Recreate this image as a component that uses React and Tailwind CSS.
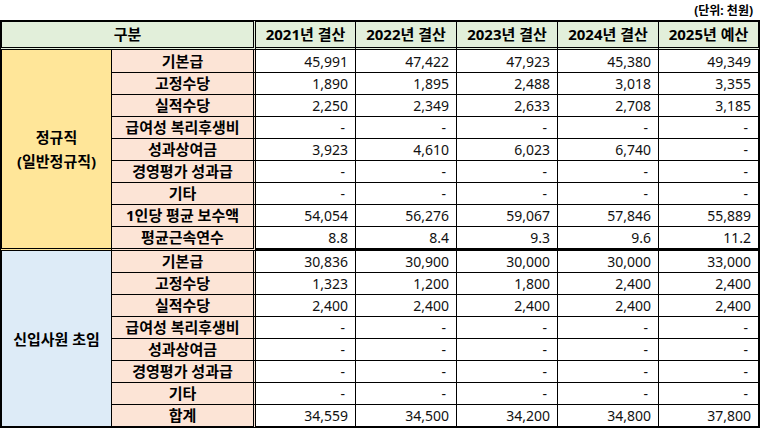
import React from "react";

const years = ["2021년 결산", "2022년 결산", "2023년 결산", "2024년 결산", "2025년 예산"];

const sec1 = [
  ["기본급", ["45,991", "47,422", "47,923", "45,380", "49,349"]],
  ["고정수당", ["1,890", "1,895", "2,488", "3,018", "3,355"]],
  ["실적수당", ["2,250", "2,349", "2,633", "2,708", "3,185"]],
  ["급여성 복리후생비", ["-", "-", "-", "-", "-"]],
  ["성과상여금", ["3,923", "4,610", "6,023", "6,740", "-"]],
  ["경영평가 성과급", ["-", "-", "-", "-", "-"]],
  ["기타", ["-", "-", "-", "-", "-"]],
  ["1인당 평균 보수액", ["54,054", "56,276", "59,067", "57,846", "55,889"]],
  ["평균근속연수", ["8.8", "8.4", "9.3", "9.6", "11.2"]],
];

const sec2 = [
  ["기본급", ["30,836", "30,900", "30,000", "30,000", "33,000"]],
  ["고정수당", ["1,323", "1,200", "1,800", "2,400", "2,400"]],
  ["실적수당", ["2,400", "2,400", "2,400", "2,400", "2,400"]],
  ["급여성 복리후생비", ["-", "-", "-", "-", "-"]],
  ["성과상여금", ["-", "-", "-", "-", "-"]],
  ["경영평가 성과급", ["-", "-", "-", "-", "-"]],
  ["기타", ["-", "-", "-", "-", "-"]],
  ["합계", ["34,559", "34,500", "34,200", "34,800", "37,800"]],
];

function bottomClass(kind) {
  if (kind === "double") return "border-b-[3px] border-double";
  if (kind === "thick") return "border-b-2";
  return "border-b";
}

function Rows({ data, label, bg, bottom }) {
  const out = [];
  data.forEach(([name, vals], i) => {
    const last = i === data.length - 1;
    const b = last ? bottomClass(bottom) : "border-b";
    if (i === 0) {
      out.push(
        <div
          key="cat"
          className={
            (data.length === 9 ? "row-span-9 " : "row-span-8 ") +
            bg +
            " border-l-2 border-r border-black flex flex-col items-center justify-center font-bold text-[15px] leading-[24px] " +
            bottomClass(bottom)
          }
        >
          {label.map((l) => (
            <span key={l}>{l}</span>
          ))}
        </div>
      );
    }
    out.push(
      <div
        key={"n" + i}
        className={
          "bg-[#FCE4D6] border-r-[3px] border-double border-black flex items-center justify-center font-bold text-[15px] " +
          b
        }
      >
        {name}
      </div>
    );
    vals.forEach((v, j) => {
      const rb = j === 4 ? "border-r-2" : "border-r";
      const pad = v === "-" ? "pr-[10px]" : "pr-[7px]";
      out.push(
        <div
          key={"v" + i + "-" + j}
          className={
            "bg-white border-black border-solid flex items-center justify-end text-[14px] text-[#111]" +
            " " +
            rb +
            " " +
            pad +
            " " +
            b
          }
        >
          {v}
        </div>
      );
    });
  });
  return out;
}

export default function App() {
  return (
    <div className="w-[760px] h-[428px] bg-white text-black font-['Noto_Sans','Noto_Sans_CJK_KR',sans-serif] overflow-hidden">
      <div className="h-[20px] flex items-end justify-end pr-[7px] pb-[3px] text-[12px] font-bold leading-none">
        (단위: 천원)
      </div>
      <div className="grid grid-cols-[112px_144px_100px_101px_101px_101px_101px] grid-rows-[30px_23px_repeat(7,22px)_24px_repeat(7,22px)_23px]">
        <div className="col-span-2 bg-[#E2EFDA] border-t-2 border-l-2 border-black border-b-[3px] border-r-[3px] border-double flex items-center justify-center font-bold text-[15px]">
          구분
        </div>
        {years.map((y, j) => (
          <div
            key={y}
            className={
              "bg-[#E2EFDA] border-t-2 border-black border-b-[3px] border-double flex items-center justify-center font-bold text-[15px] " +
              (j === 4 ? "border-r-2" : "border-r")
            }
          >
            {y}
          </div>
        ))}
        <Rows data={sec1} label={["정규직", "(일반정규직)"]} bg="bg-[#FFE699]" bottom="double" />
        <Rows data={sec2} label={["신입사원 초임"]} bg="bg-[#DDEBF7]" bottom="thick" />
      </div>
    </div>
  );
}
